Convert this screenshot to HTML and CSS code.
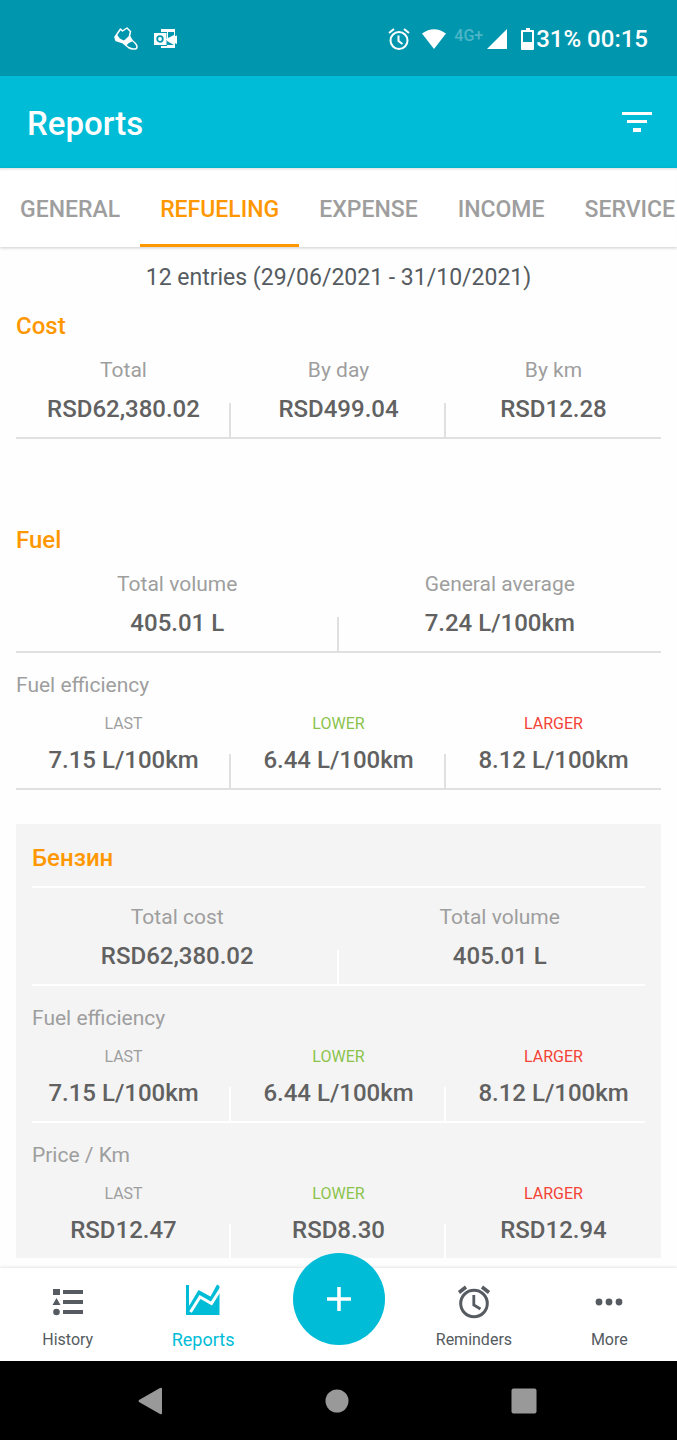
FILE: index.html
```
<!DOCTYPE html>
<html lang="en">
<head>
  <meta charset="UTF-8">
  <meta name="viewport" content="width=device-width, initial-scale=1.0">
  <title>Reports</title>
  <link rel="stylesheet" href="styles.css">
</head>
<body>
  <div class="status-bar">
    <div class="status-left">
      <svg width="26" height="26" viewBox="0 0 26 26">
        <path d="M2 11 L7.500 3 L9.500 5 L14 2 L17.500 5.500 L16.500 10 Q18.500 14.500 22 17 Q25 20 23.500 22.500 Q19.500 24 15.500 21.500 L9.500 16.500 L3 14.500 Z" fill="none" stroke="#fff" stroke-width="1.500" stroke-linejoin="round"/>
        <path d="M2 11 L4.500 9 Q6 13 11 14.500 L16.500 9.500 Q17.500 13 19.500 15.500 Q14.500 16.500 13.500 20 L9.500 16.500 L3 14.500 Z" fill="#fff"/>
      </svg>
      <svg width="24" height="20" viewBox="0 0 24 20">
        <path d="M7 0 H21 V8 L14 10.500 L21 14 V19 H7 V17 H13 V3 H7 Z" fill="#fff"/>
        <path d="M8 3 H20 V6 L14 9 V3 Z" fill="#0097ae"/>
        <path d="M13 12 L20 16 H13 Z" fill="#0097ae"/>
        <path d="M11 10.500 L23 6.500 V15 Z" fill="#fff"/>
        <rect x="0" y="4" width="12.500" height="12" fill="#fff"/>
        <circle cx="6" cy="10" r="2.800" fill="none" stroke="#0097ae" stroke-width="1.800"/>
      </svg>
    </div>
    <div class="status-right">
      <svg class="status-alarm" width="22" height="22" viewBox="0 0 22 22" fill="none" stroke="#fff" stroke-width="2">
        <circle cx="11" cy="12.500" r="8.500"/>
        <path d="M10.500 7.500 V13 L14.500 16 M1 5 L6 1 M21 5 L16 1"/>
      </svg>
      <svg class="status-wifi" width="24" height="20" viewBox="0 0 24 20"><path d="M0 4.500 Q12 -4 24 4.500 L12 20 Z" fill="#fff"/></svg>
      <span class="network">4G+</span>
      <svg class="status-signal" width="20" height="20" viewBox="0 0 20 20"><path d="M20 0 V20 H0 Z" fill="#fff"/></svg>
      <svg width="14" height="22" viewBox="0 0 14 22">
        <path d="M5 0 H9 V2 H12 Q13 2 13 3 V21 Q13 22 12 22 H1 Q0 22 0 21 V3 Q0 2 1 2 H5 Z M2 4 V14 H11 V4 Z" fill="#fff" fill-rule="evenodd"/>
      </svg>
      <span class="clock">31% 00:15</span>
    </div>
  </div>

  <header class="app-bar">
    <h1>Reports</h1>
    <button class="filter-button" aria-label="Filter">
      <svg width="30" height="20" viewBox="0 0 30 20" fill="#fff">
        <path d="M0 0 H30 V3 H0 Z M5 8 H25 V11 H5 Z M11 16 H19 V20 H11 Z"/>
      </svg>
    </button>
  </header>

  <nav class="tabs" aria-label="Report type">
    <button class="tab">GENERAL</button>
    <button class="tab active">REFUELING</button>
    <button class="tab">EXPENSE</button>
    <button class="tab">INCOME</button>
    <button class="tab">SERVICE</button>
  </nav>

  <main class="content">
    <p class="entries">12 entries (29/06/2021 - 31/10/2021)</p>

    <section class="report cost">
      <h2>Cost</h2>
      <dl class="stats">
        <div class="stat"><dt>Total</dt><dd>RSD62,380.02</dd></div>
        <div class="stat"><dt>By day</dt><dd>RSD499.04</dd></div>
        <div class="stat"><dt>By km</dt><dd>RSD12.28</dd></div>
      </dl>
      <hr>
    </section>

    <section class="report fuel">
      <h2>Fuel</h2>
      <dl class="stats">
        <div class="stat"><dt>Total volume</dt><dd>405.01 L</dd></div>
        <div class="stat"><dt>General average</dt><dd>7.24 L/100km</dd></div>
      </dl>
      <hr>
      <h3>Fuel efficiency</h3>
      <dl class="stats range">
        <div class="stat"><dt>LAST</dt><dd>7.15 L/100km</dd></div>
        <div class="stat"><dt class="lower">LOWER</dt><dd>6.44 L/100km</dd></div>
        <div class="stat"><dt class="larger">LARGER</dt><dd>8.12 L/100km</dd></div>
      </dl>
      <hr>
    </section>

    <section class="report card">
      <h2>Бензин</h2>
      <hr>
      <dl class="stats">
        <div class="stat"><dt>Total cost</dt><dd>RSD62,380.02</dd></div>
        <div class="stat"><dt>Total volume</dt><dd>405.01 L</dd></div>
      </dl>
      <hr>
      <h3>Fuel efficiency</h3>
      <dl class="stats range">
        <div class="stat"><dt>LAST</dt><dd>7.15 L/100km</dd></div>
        <div class="stat"><dt class="lower">LOWER</dt><dd>6.44 L/100km</dd></div>
        <div class="stat"><dt class="larger">LARGER</dt><dd>8.12 L/100km</dd></div>
      </dl>
      <hr>
      <h3>Price / Km</h3>
      <dl class="stats range">
        <div class="stat"><dt>LAST</dt><dd>RSD12.47</dd></div>
        <div class="stat"><dt class="lower">LOWER</dt><dd>RSD8.30</dd></div>
        <div class="stat"><dt class="larger">LARGER</dt><dd>RSD12.94</dd></div>
      </dl>
    </section>
  </main>

  <nav class="bottom-nav" aria-label="Main">
    <a class="nav-item" href="#history">
      <svg width="36" height="36" viewBox="0 0 36 36" fill="currentColor">
        <path d="M3 5 H10 V11 H3 Z M6.500 14 L10.500 21 H2.500 Z M13 6 H33 V10 H13 Z M13 16 H33 V20 H13 Z M13 26 H33 V30 H13 Z"/>
        <circle cx="6.500" cy="28" r="3.300"/>
      </svg>
      <span>History</span>
    </a>
    <a class="nav-item active" href="#reports">
      <svg width="36" height="36" viewBox="0 0 36 36">
        <path d="M1 1 H4 V22 L13.500 6 L25.500 12.500 L32 0.500 L34.500 2 V31 H1 Z" fill="currentColor"/>
        <path d="M5.500 28 L15 13 L26.500 19.500 L36 4.500" fill="none" stroke="#fff" stroke-width="3"/>
      </svg>
      <span>Reports</span>
    </a>
    <div class="nav-item">
      <button class="add-button" aria-label="Add">
        <svg width="24" height="24" viewBox="0 0 24 24"><path d="M12 0 V24 M0 12 H24" stroke="#fff" stroke-width="3.500"/></svg>
      </button>
    </div>
    <a class="nav-item" href="#reminders">
      <svg width="36" height="36" viewBox="0 0 36 36" fill="none" stroke="currentColor" stroke-width="3">
        <circle cx="18" cy="19.500" r="13.300"/>
        <path d="M17.800 11 V21 L24.500 25" stroke-width="2.800"/>
        <path d="M3 8.500 L10 3 M33 8.500 L26 3" stroke-width="3.500"/>
      </svg>
      <span>Reminders</span>
    </a>
    <a class="nav-item" href="#more">
      <svg width="36" height="36" viewBox="0 0 36 36" fill="currentColor">
        <circle cx="8" cy="18" r="3.400"/><circle cx="18" cy="18" r="3.400"/><circle cx="28" cy="18" r="3.400"/>
      </svg>
      <span>More</span>
    </a>
  </nav>

  <div class="system-nav">
    <button aria-label="Back">
      <svg width="24" height="28" viewBox="0 0 24 28"><path d="M1 13 L22 1 Q24 0 24 2 V26 Q24 28 22 27 L1 15 Q0 14 1 13 Z" fill="#999"/></svg>
    </button>
    <button aria-label="Home">
      <svg width="24" height="24" viewBox="0 0 24 24"><circle cx="12" cy="12" r="11.500" fill="#999"/></svg>
    </button>
    <button aria-label="Recent apps">
      <svg width="26" height="26" viewBox="0 0 26 26"><rect x="0.500" y="0.500" width="25" height="25" rx="2" fill="#999"/></svg>
    </button>
  </div>
</body>
</html>
```
FILE: styles.css
```
* {
  box-sizing: border-box;
}
body {
  margin: 0;
  height: 100vh;
  display: flex;
  flex-direction: column;
  overflow: hidden;
  background: #fefefe;
  color: #616161;
  font-family: Roboto, sans-serif;
  font-size: 21px;
}
h1, h2, h3, p, dl, dd {
  margin: 0;
}
button {
  padding: 0;
  border: none;
  background: none;
  font-family: inherit;
  cursor: pointer;
}
svg {
  display: block;
  flex-shrink: 0;
}

/* Status bar */
.status-bar {
  flex-shrink: 0;
  height: 76px;
  display: flex;
  align-items: center;
  justify-content: space-between;
  padding: 2px 29px 0 113px;
  background: #0097ae;
  color: white;
}
.status-left {
  display: flex;
  align-items: center;
  gap: 15px;
}
.status-right {
  display: flex;
  align-items: center;
}
.status-alarm {
  margin-right: 12px;
}
.status-wifi {
  margin-right: 8px;
}
.network {
  margin-right: 4px;
  padding-bottom: 8px;
  font-size: 16px;
  font-weight: 500;
  color: #4db6c6;
}
.status-signal {
  margin-right: 14px;
}
.clock {
  margin-left: 1px;
  font-size: 24px;
  font-weight: 500;
}

/* App bar and tabs */
.app-bar {
  flex-shrink: 0;
  height: 92px;
  display: flex;
  align-items: center;
  justify-content: space-between;
  padding: 2px 25px 0 27px;
  background: #00bcd6;
  color: white;
}
.filter-button {
  padding-bottom: 2px;
}
h1 {
  font-size: 33px;
  font-weight: 500;
}
.tabs {
  flex-shrink: 0;
  height: 79px;
  display: flex;
  overflow: hidden;
  background: white;
  box-shadow: 0 1px 3px rgba(0, 0, 0, 0.2), inset 0 3px 3px -2px rgba(0, 0, 0, 0.15);
}
.tab {
  flex-shrink: 0;
  padding: 6px 20px 0;
  border-bottom: 3px solid transparent;
  color: #9e9e9e;
  font-size: 23px;
  font-weight: 500;
}
.tab.active {
  border-bottom-color: #ff9800;
  color: #ff9800;
}

/* Report */
.content {
  flex: 1;
  min-height: 0;
  overflow: hidden;
  padding: 16px 16px 0;
}
.entries {
  color: #555b60;
  font-size: 23px;
  line-height: 30px;
  text-align: center;
}
h2 {
  color: #ff9800;
  font-size: 24px;
  font-weight: 500;
  line-height: 30px;
}
h3 {
  padding-top: 17px;
  color: #9e9e9e;
  font-size: 21px;
  font-weight: 400;
  line-height: 30px;
}
hr {
  height: 2px;
  margin: 0;
  border: none;
  background: #e0e0e0;
}
.cost {
  margin-top: 18px;
}
.fuel {
  margin-top: 86px;
}
.stats {
  display: flex;
  padding-top: 14px;
}
.stat {
  flex: 1 1 0;
  padding-bottom: 13px;
  text-align: center;
}
/* short divider rising from the bottom line */
.stat:not(:last-child) {
  background: linear-gradient(#e0e0e0, #e0e0e0) right bottom / 2px 34px no-repeat;
}
dt {
  color: #9e9e9e;
  font-size: 21px;
  line-height: 30px;
}
dd {
  margin-top: 9px;
  font-size: 24px;
  font-weight: 500;
  line-height: 30px;
}
.range {
  padding-top: 14px;
}
.range dt {
  font-size: 16px;
  line-height: 20px;
}
.range dd {
  margin-top: 11px;
}
dt.lower {
  color: #8bc34a;
}
dt.larger {
  color: #f44336;
}
.card {
  margin-top: 34px;
  padding-top: 19px;
  background: #f4f4f4;
}
.card h2,
.card h3 {
  padding-left: 16px;
}
.card h2 {
  padding-bottom: 13px;
}
.card hr {
  margin: 0 16px;
  background: white;
}
.card .stat:not(:last-child) {
  background-image: linear-gradient(white, white);
}

/* Bottom navigation */
.bottom-nav {
  flex-shrink: 0;
  height: 93px;
  display: flex;
  background: white;
  box-shadow: 0 -1px 3px rgba(0, 0, 0, 0.1);
}
.nav-item {
  flex: 1 1 0;
  display: flex;
  flex-direction: column;
  align-items: center;
  padding-top: 16px;
  color: #555b60;
  font-size: 16px;
  line-height: 20px;
  text-decoration: none;
}
.nav-item span {
  margin-top: 10px;
}
.nav-item.active {
  color: #00bcd6;
  font-size: 18px;
}
.add-button {
  flex-shrink: 0;
  width: 92px;
  height: 92px;
  margin-top: -31px;
  display: flex;
  align-items: center;
  justify-content: center;
  border-radius: 50%;
  background: #00bcd6;
}

/* System buttons */
.system-nav {
  flex-shrink: 0;
  height: 79px;
  display: flex;
  align-items: center;
  justify-content: space-between;
  padding: 0 140px 0 138px;
  background: black;
}
```
